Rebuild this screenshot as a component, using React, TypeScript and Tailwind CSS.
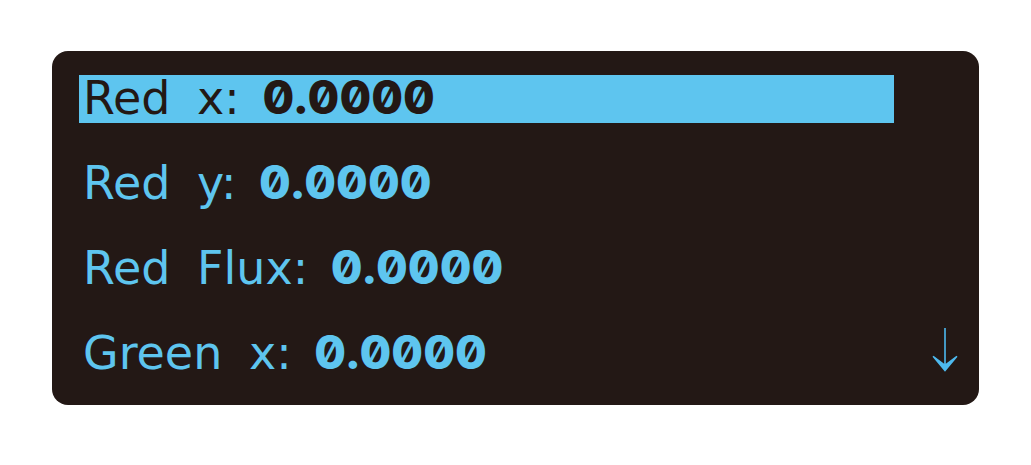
const items = [
  { words: ["Red", "x:"], value: "0.0000" },
  { words: ["Red", "y:"], value: "0.0000" },
  { words: ["Red", "Flux:"], value: "0.0000" },
  { words: ["Green", "x:"], value: "0.0000" },
];

function Row({ words, value, selected }: { words: string[]; value: string; selected: boolean }) {
  return (
    <li
      aria-current={selected ? "true" : undefined}
      className={
        selected
          ? "h-12 whitespace-pre bg-[#5ec5ef] pl-1 text-[46px] leading-[45px] text-[#231815]"
          : "h-12 whitespace-pre pl-1 text-[46px] leading-[45px] text-[#5ec5ef]"
      }
    >
      <span>{words[0]} </span>
      <span className="ml-3">{words[1]} </span>
      <span className="ml-2 font-['Inter',sans-serif] font-extrabold slashed-zero">{value}</span>
    </li>
  );
}

export default function App() {
  return (
    <main className="min-h-screen bg-white px-[52px] py-[51px]">
      <section className="flex items-end rounded-2xl bg-[#231815] pt-6 pr-[21px] pb-[27px] pl-[27px] font-['DejaVu_Sans',sans-serif]">
        <ul className="flex min-w-0 flex-1 flex-col gap-[37px]">
          {items.map((item, i) => (
            <Row key={i} words={item.words} value={item.value} selected={i === 0} />
          ))}
        </ul>
        <svg
          role="img"
          aria-label="More items below"
          className="mb-1 ml-[38px] h-[46px] w-[26px] shrink-0"
          viewBox="0 0 26 46"
        >
          <path d="M12.2 0h1.6v35.7l10.7-8 1 1L13 43.8 0.5 28.7l1-1 10.7 8z" fill="#4db9ee" />
        </svg>
      </section>
    </main>
  );
}
